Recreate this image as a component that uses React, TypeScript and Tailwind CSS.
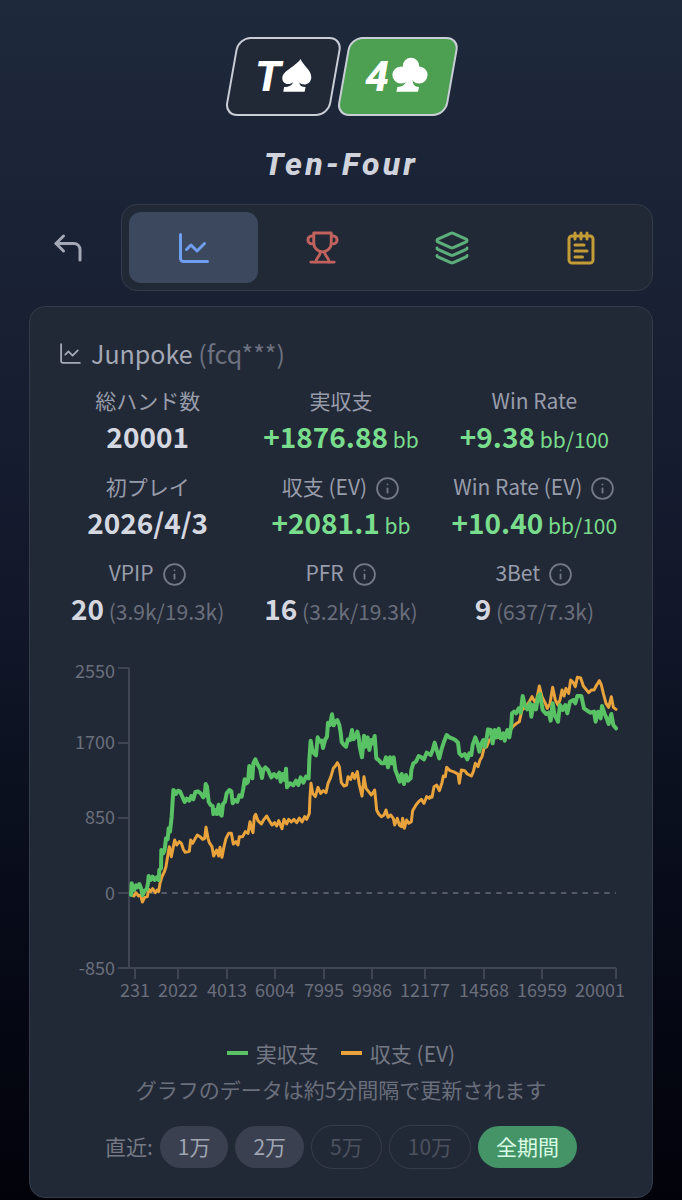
import React from 'react';
import { ChartLine, CornerUpLeft, Info, Layers, NotepadText } from 'lucide-react';

type Stat = {
  label: string;
  value: string;
  unit?: string;
  detail?: string;
  info?: boolean;
  positive?: boolean;
};

const stats: Stat[] = [
  { label: '総ハンド数', value: '20001' },
  { label: '実収支', value: '+1876.88', unit: 'bb', positive: true },
  { label: 'Win Rate', value: '+9.38', unit: 'bb/100', positive: true },
  { label: '初プレイ', value: '2026/4/3' },
  { label: '収支 (EV)', value: '+2081.1', unit: 'bb', positive: true, info: true },
  { label: 'Win Rate (EV)', value: '+10.40', unit: 'bb/100', positive: true, info: true },
  { label: 'VPIP', value: '20', detail: '(3.9k/19.3k)', info: true },
  { label: 'PFR', value: '16', detail: '(3.2k/19.3k)', info: true },
  { label: '3Bet', value: '9', detail: '(637/7.3k)', info: true },
];

const yTicks = [
  { label: '2550', y: 18, textY: 28 },
  { label: '1700', y: 93, textY: 99 },
  { label: '850', y: 168, textY: 174 },
  { label: '0', y: 243, textY: 250 },
  { label: '-850', y: 318, textY: 325 },
];

const xTicks = [
  { label: '231', x: 77 },
  { label: '2022', x: 120 },
  { label: '4013', x: 169 },
  { label: '6004', x: 217 },
  { label: '7995', x: 266 },
  { label: '9986', x: 314 },
  { label: '12177', x: 367 },
  { label: '14568', x: 426 },
  { label: '16959', x: 484 },
  { label: '20001', x: 558, textX: 542 },
];

// Each part is [x offset, "x,y x,y ..."] on the plot's fine grid (1698 x 1080)
type Part = [number, string];

const actual: Part[] = [
  [6, '213,735 215,700 218,712 222,720 228,706 232,712 238,702 243,715 248,735 254,722 260,718 264,700 266,678 272,690 278,680 284,690 290,682 296,690 298,660 303,655 304,600 310,610 314,600 318,565 323,568 326,535 330,545 335,500 340,420 345,425 348,432 354,422 360,424 366,438 374,456 380,446 388,452 394,438 400,448 406,426 414,424 422,430 430,442 434,436 437,402 441,410 446,455 452,465 458,468 460,492 466,480 470,492 476,464 480,492 485,497 489,462 495,455 500,430 508,420 514,424 518,460 526,450 532,455 538,436'],
  [546, '5,440 10,415 14,388 20,400 24,395 28,348 33,370 37,385 40,340 46,328 52,342 60,355 66,384 70,360 76,352 84,360 94,382 102,372 110,382 118,368 122,395 128,372 134,390 138,356 141,412 150,400 160,406 168,392 175,405 182,382 190,398 198,380 206,385 208,330 212,272 217,300 222,310 228,316 233,262 240,275 245,272 249,294 256,268 261,260 264,218 270,225 276,193 281,226 286,215 292,210 298,225 302,248 305,276 312,285 318,290 324,268 330,270 336,240 340,268 346,262 352,245 356,260 359,290 366,322 372,257 377,290 383,262 388,300 394,270 399,280 404,258 409,325 416,330 424,340 432,340 438,322 444,352 450,322 456,340 461,322 466,360 472,375 479,395 485,372 492,402 498,375 504,392 512,385 514,360 520,340 528,335 536,318 544,322 552,328 560,308 568,312'],
  [1116, '2,315 8,300 14,278 20,300 28,325 34,300 42,275 50,255 58,262 66,265 76,270 84,278 88,310 96,318 104,312 112,328 118,310 124,315 128,285 136,262 142,278 148,305 154,282 160,270 164,290 170,265 174,238 182,240 188,280 194,240 200,262 206,236 212,265 220,250 224,272 232,240 238,262 244,225 246,190 252,185 258,190 266,175 272,188 278,138 284,165 292,178 300,160 304,200 310,165 318,178 324,140 330,132 338,180 348,192 356,188 362,212 368,160 374,195 384,215 390,165 398,180 406,165 412,190 420,155 430,150 436,160 442,138 454,138 462,175 472,182 482,188 492,185 497,215 504,185 512,205 516,168 524,192 530,205 536,222 544,192 550,225 558,235'],
];

const expected: Part[] = [
  [6, '215,735 222,738 228,728 236,738 242,735 247,756 254,742 262,740 266,718 272,725 278,716 286,728 292,720 296,725 300,700 306,680 312,668 318,650 322,625 328,590 334,620 338,600 344,570 350,585 358,575 364,580 370,598 376,607 388,604 392,570 398,580 406,565 412,555 420,560 428,568 434,565 438,532 444,565 448,578 456,590 461,618 470,600 476,618 480,592 486,622 492,590 498,565 506,550 514,550 520,582 528,575 534,585 538,560'],
  [546, '2,560 8,560 16,545 24,550 30,515 34,535 39,548 43,500 47,493 54,512 64,522 72,508 80,498 88,512 96,525 104,518 110,528 116,512 126,536 132,508 140,522 146,508 154,516 162,508 170,518 178,504 186,516 194,500 200,508 208,490 210,440 213,400 218,430 226,440 234,412 242,430 250,422 258,428 264,400 272,382 280,355 286,348 292,338 298,350 304,398 312,408 320,405 324,380 332,388 338,370 344,385 352,365 358,405 366,438 372,380 378,415 386,425 394,435 404,420 410,480 416,492 424,500 432,495 438,480 444,502 452,495 460,505 464,525 472,505 478,525 484,530 488,505 493,535 500,510 506,520 514,515 518,482 528,465 536,455 544,448 552,460 560,440 568,445'],
  [1116, '0,440 6,442 12,410 20,405 28,422 36,398 40,378 46,380 50,352 60,362 70,365 80,370 84,372 88,400 94,360 104,362 112,372 124,378 130,365 136,340 144,350 150,330 156,320 162,295 170,290 178,270 188,265 200,262 212,262 224,255 238,245 250,228 260,220 268,215 276,180 288,170 298,155 306,140 314,155 320,148 328,108 336,140 346,160 352,175 360,160 368,112 376,150 384,165 390,150 396,120 402,138 408,115 416,130 422,90 430,98 436,110 442,82 452,84 460,108 468,118 476,128 484,120 492,120 500,105 508,92 514,105 520,130 528,160 536,172 544,140 550,172 558,178'],
];

function toPoints(parts: Part[]) {
  return parts
    .flatMap(([offset, text]) =>
      text.split(' ').map((pair) => {
        const [x, y] = pair.split(',').map(Number);
        return `${x + offset},${y}`;
      })
    )
    .join(' ');
}

export default function App() {
  return (
    <div className="min-h-screen bg-linear-to-b from-[#1f293c] via-[#12182a] to-[#02030a] font-['Noto_Sans_CJK_JP',sans-serif] text-[#d5d8e0]">
      <div className="mx-auto max-w-3xl px-[29px] pt-9">
        <header className="flex flex-col items-center">
          <Logo />
          <h1 className="mt-7 mb-5 font-[Roboto,sans-serif] text-[32px] leading-10 font-extrabold italic tracking-widest text-[#d0d3dc]">
            Ten-Four
          </h1>
        </header>

        <nav className="flex items-stretch gap-[14px]">
          <button aria-label="戻る" className="flex w-[78px] items-center justify-center text-[#a3a8b6]">
            <CornerUpLeft size={36} />
          </button>
          <div className="grid flex-1 grid-cols-4 rounded-2xl border border-[#343b4a] bg-[#222936] p-[7px]">
            <button aria-label="グラフ" className="flex h-[71px] items-center justify-center rounded-xl bg-[#3b485e] text-[#6f9df0]">
              <ChartLine size={36} />
            </button>
            <button aria-label="トーナメント" className="flex h-[71px] items-center justify-center text-[#c1625f]">
              <TrophyIcon />
            </button>
            <button aria-label="ハンド" className="flex h-[71px] items-center justify-center text-[#5cae7b]">
              <Layers size={36} />
            </button>
            <button aria-label="ノート" className="flex h-[71px] items-center justify-center text-[#c39c37]">
              <NotepadText size={36} />
            </button>
          </div>
        </nav>

        <main className="mt-[15px] rounded-2xl border border-[#343b4a] bg-[#222936] p-7">
          <h2 className="flex items-center gap-2 text-[25px] leading-9 text-[#a3a8b5]">
            <ChartLine size={25} strokeWidth={1.75} />
            <span>
              Junpoke <span className="text-[#6d7280]">(fcq***)</span>
            </span>
          </h2>

          <dl className="mt-[14px] grid grid-cols-3 gap-x-[14px] gap-y-[14px]">
            {stats.map((stat) => (
              <StatItem key={stat.label} stat={stat} />
            ))}
          </dl>

          <Chart />

          <div className="mt-[35px] flex justify-center gap-[22px] text-[21px] leading-9 text-[#747985]">
            <div className="flex items-center gap-2">
              <span className="h-1 w-[21px] bg-[#58c265]" />
              実収支
            </div>
            <div className="flex items-center gap-2">
              <span className="h-1 w-[21px] bg-[#e8a33c]" />
              収支 (EV)
            </div>
          </div>
          <p className="text-center text-[21px] leading-9 text-[#6a6f7c]">グラフのデータは約5分間隔で更新されます</p>

          <div className="mt-[18px] flex items-center justify-center gap-[7px] text-[21px]">
            <span className="text-[#747985]">直近:</span>
            <button className="h-[42px] rounded-full bg-[#3a4050] px-[18px] text-[#a0a5b2]">1万</button>
            <button className="h-[42px] rounded-full bg-[#3a4050] px-[18px] text-[#a0a5b2]">2万</button>
            <button disabled className="h-11 rounded-full border border-[#363c4a] px-[18px] text-[#4c525f]">5万</button>
            <button disabled className="h-11 rounded-full border border-[#363c4a] px-[18px] text-[#4c525f]">10万</button>
            <button className="h-[42px] rounded-full bg-[#449468] px-[18px] text-[#d8fbe4]">全期間</button>
          </div>
        </main>
      </div>
    </div>
  );
}

function StatItem({ stat }: { stat: Stat }) {
  return (
    <div className="text-center whitespace-nowrap">
      <dt className="flex h-[30px] items-center justify-center gap-2 text-[21px] leading-[30px] text-[#989dab]">
        {stat.label}
        {stat.info && <Info size={25} strokeWidth={1.75} className="mt-1 text-[#747986]" />}
      </dt>
      <dd className={stat.positive ? 'text-[28px] leading-[42px] text-[#79dd8d]' : 'text-[28px] leading-[42px]'}>
        <span className="font-bold">{stat.value}</span>
        {stat.unit && <span className="text-[21px] leading-none"> {stat.unit}</span>}
        {stat.detail && <span className="text-[21px] leading-none text-[#6a6f7c]"> {stat.detail}</span>}
      </dd>
    </div>
  );
}

function Chart() {
  return (
    <svg viewBox="0 0 566 350" className="mt-[21px] block w-full overflow-visible" role="img" aria-label="収支グラフ">
      {/* Axes */}
      <g stroke="#3f4553" strokeWidth="2" fill="none">
        <path d="M71 18V318H558" />
        {yTicks.map((t) => (
          <path key={t.label} d={`M60 ${t.y}H71`} />
        ))}
        {xTicks.map((t) => (
          <path key={t.label} d={`M${t.x} 318V329`} />
        ))}
      </g>
      <path d="M71 243H558" stroke="#555a67" strokeWidth="2" strokeDasharray="5.4 5.4" />
      <g fill="#6a6f7c" fontSize="18">
        {yTicks.map((t) => (
          <text key={t.label} x="57" y={t.textY} textAnchor="end">{t.label}</text>
        ))}
        {xTicks.map((t) => (
          <text key={t.label} x={t.textX ?? t.x} y="347" textAnchor="middle">{t.label}</text>
        ))}
      </g>

      {/* Lines */}
      <svg width="566" height="360" viewBox="0 0 1698 1080" fill="none" strokeLinejoin="round" strokeLinecap="round">
        <polyline points={toPoints(expected)} stroke="#e8a33c" strokeWidth="9" />
        <polyline points={toPoints(actual)} stroke="#58c265" strokeWidth="12" />
      </svg>
    </svg>
  );
}

function Logo() {
  return (
    <svg width="236" height="80" viewBox="0 0 236 80" role="img" aria-label="T♠ 4♣">
      <g stroke="#c9cdd6" strokeWidth="2">
        <rect x="16" y="2" width="103" height="77" rx="12" fill="#212936" transform="skewX(-10)" />
        <rect x="128" y="2" width="108" height="77" rx="12" fill="#4da052" transform="skewX(-10)" />
      </g>
      <g fill="#fff">
        <g className="font-[Roboto,sans-serif] text-[43px] font-extrabold italic">
          <text x="32" y="55">T</text>
          <text x="142" y="55">4</text>
        </g>
        <path d="M77.700 23C79.500 29 88.300 34 88.300 41c0 5-3.500 7.500-7 7.500-2 0-4-.8-5-2 .3 3 2.500 4.500 6.300 4.500l-1 4.700H60.300l.8-4.700c5 0 8-1.800 9-5-1.300 1.400-3 2-5 2-3.600 0-5.800-2.400-5.800-6 0-7 12.700-11 18.400-19Z" />
        <circle cx="188" cy="30" r="8.200" />
        <circle cx="178" cy="39" r="8.600" />
        <circle cx="196" cy="39" r="8.600" />
        <path d="M184 34h8l-2.500 9c0 5 2 8 6.500 8l-1 4.700h-21.500l.8-4.700c5.500 0 8.500-3 9.500-8Z" />
      </g>
    </svg>
  );
}

function TrophyIcon() {
  return (
    <svg width="35" height="35" viewBox="0 0 24 24" fill="none" stroke="currentColor" strokeWidth="2" strokeLinecap="round" strokeLinejoin="round">
      <path d="M6 9.500H4.700a2.700 2.700 0 0 1 0-5.400H6" />
      <path d="M18 9.500h1.300a2.700 2.700 0 0 0 0-5.400H18" />
      <path d="M4 22h16" />
      <path d="M10.500 15c0 3.300-3 3.500-3 7" />
      <path d="M13.500 15c0 3.300 3 3.500 3 7" />
      <path d="M18 2H6v7a6 6 0 0 0 12 0V2Z" />
    </svg>
  );
}
